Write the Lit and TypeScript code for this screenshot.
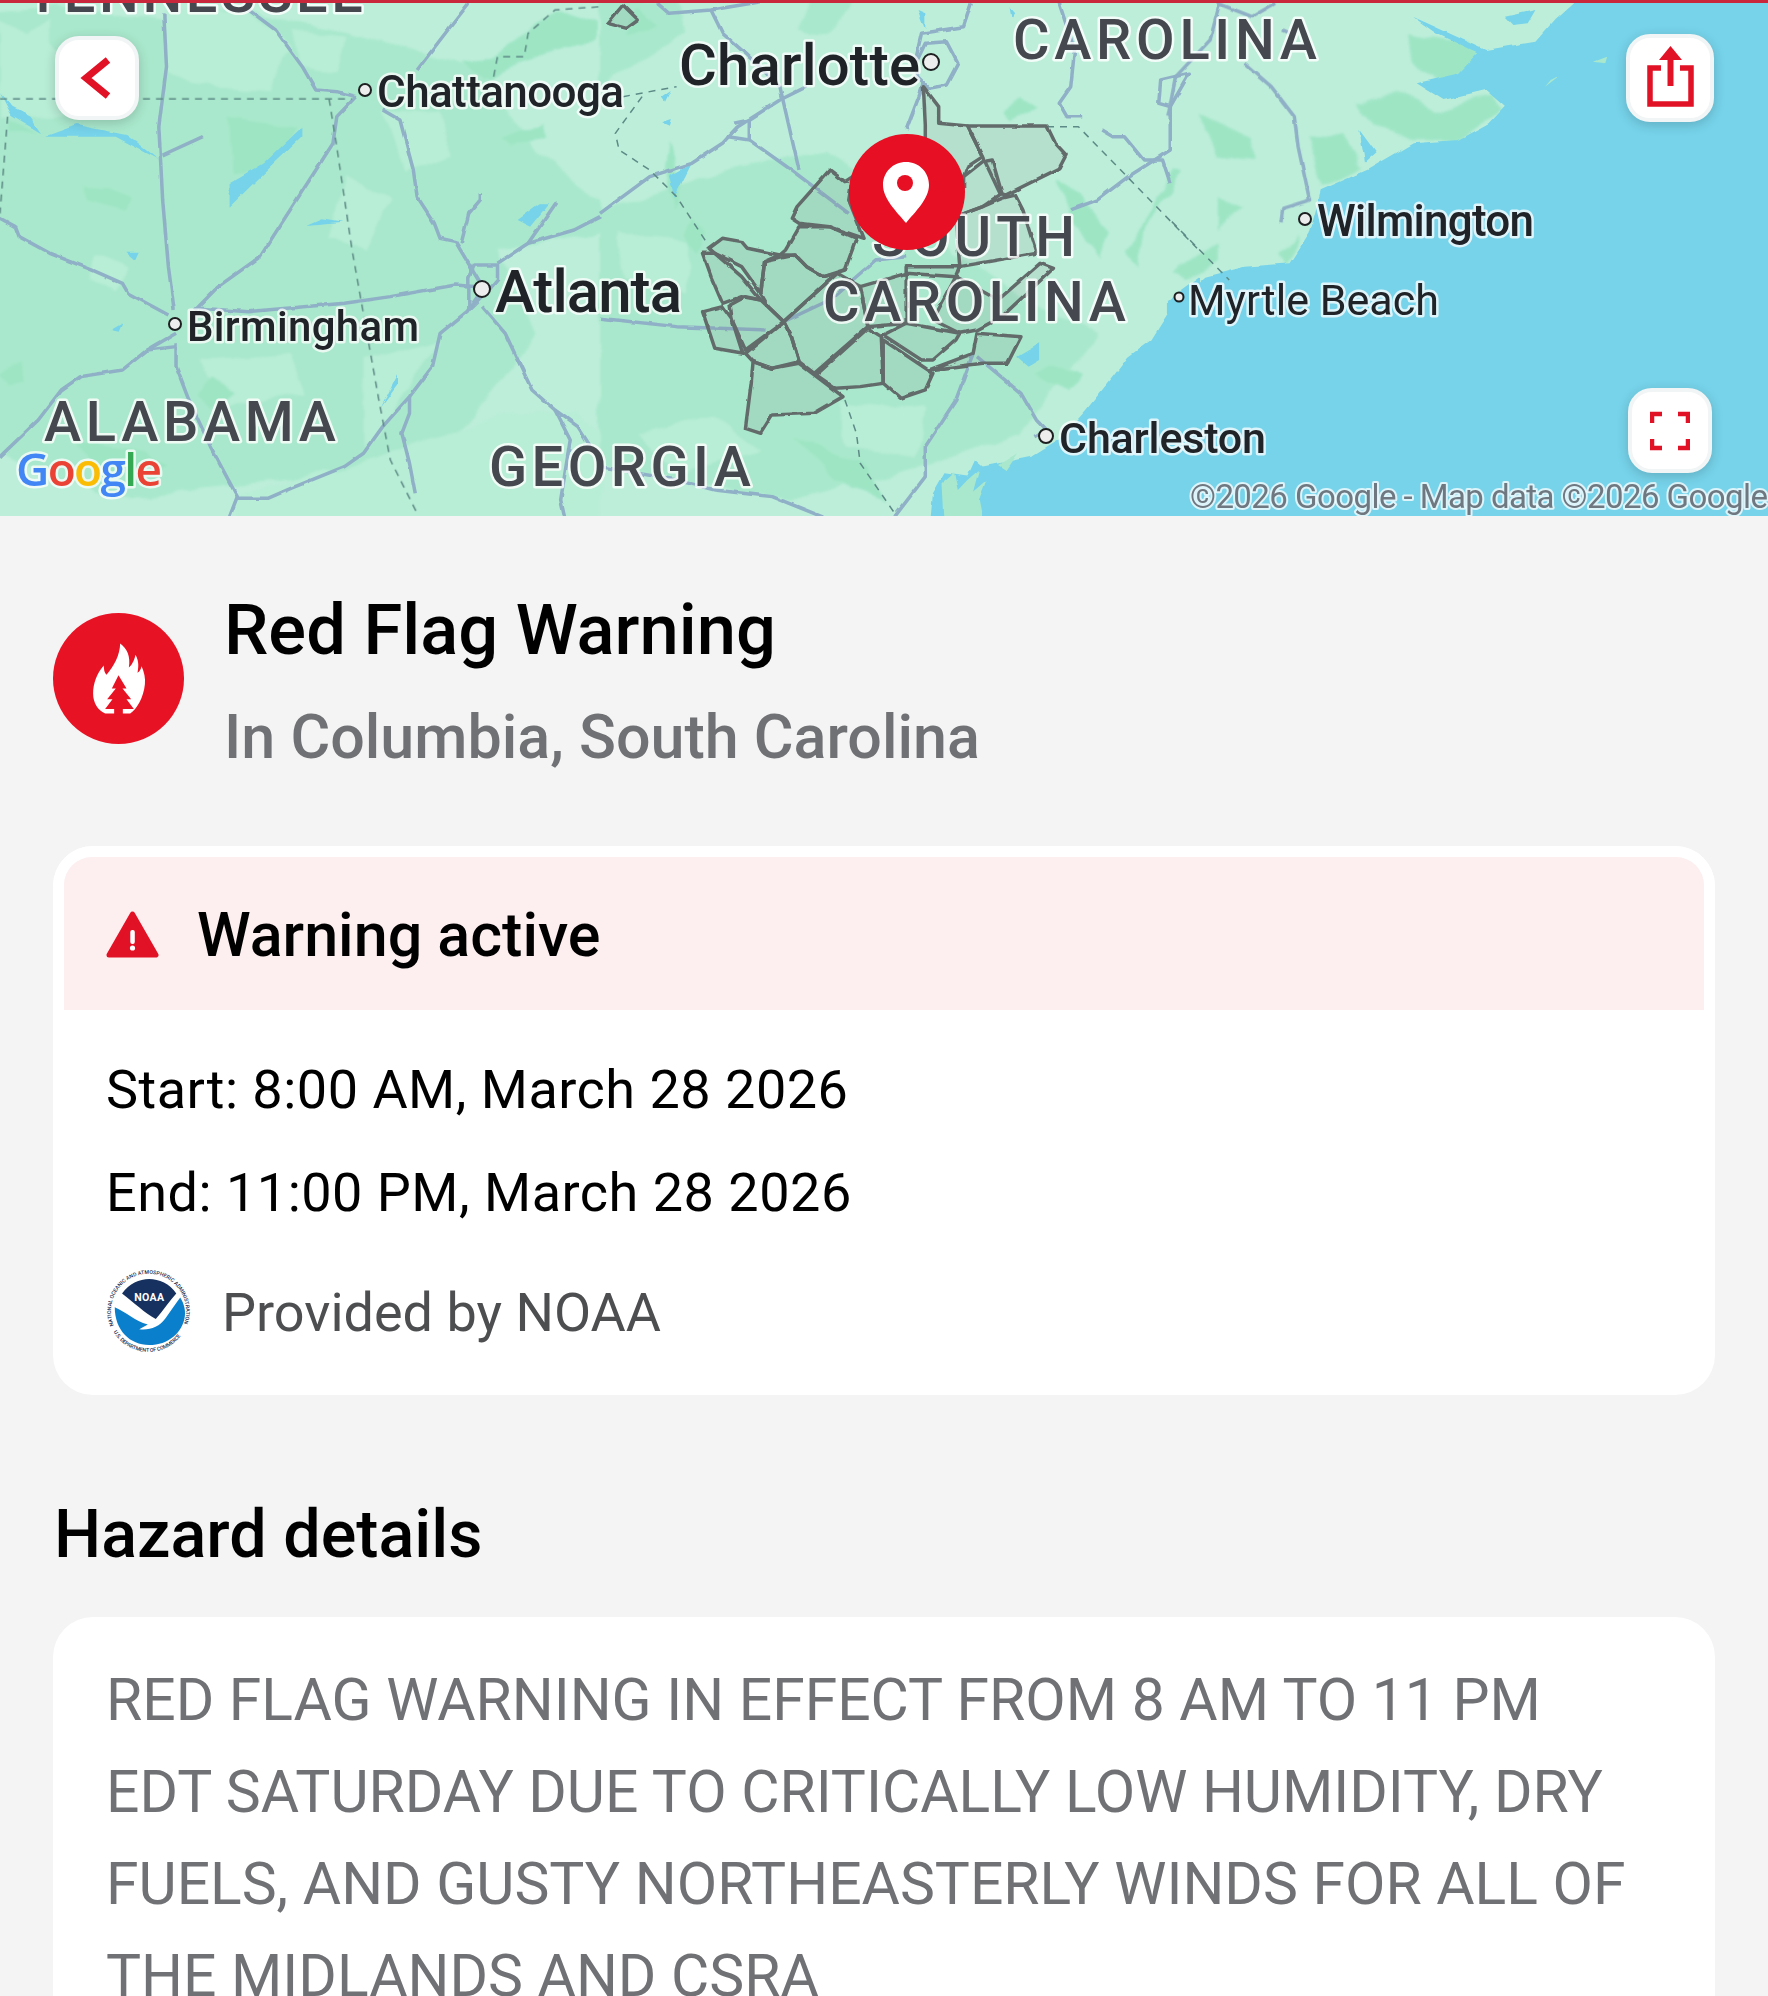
import { LitElement, html, svg, css } from 'lit';
import { customElement } from 'lit/decorators.js';

// map shapes were traced per region, each region has its own x offset
type Region = {
  ox: number;
  mid?: string[];
  dark?: string[];
  light?: string[];
  water?: string[];
  marsh?: string[];
  roads?: string[];
  borders?: string[];
  counties?: string[];
};

const REGIONS: Region[] = [
  {
    ox: 0,
    mid: [
      '-20,40 150,20 420,60 600,20 900,100 1250,200 1400,450 1568,600 1568,700 1300,750 1400,1000 1200,1300 950,1400 700,1450 300,1500 -20,1350',
    ],
    light: [
      '0,60 70,100 130,60 130,180 60,280 0,290',
      '430,30 640,30 760,130 700,280 520,260 430,210',
      '760,90 900,110 880,220 790,200',
      '1000,330 1150,340 1180,470 1060,520',
      '900,520 1020,600 960,760 860,720',
      '250,760 330,800 300,880 240,840',
      '950,1080 1150,1020 1050,1180 1000,1300 950,1350',
      '620,1490 900,1400 1100,1330 1300,1250 1500,1230 1568,1300 1568,1560 620,1560',
      '130,120 280,350 0,350 0,300',
      '520,1080 760,1060 800,1180 600,1220',
    ],
    dark: [
      '220,560 290,565 345,590 325,630 230,600',
      '600,350 780,380 690,510 610,520',
      '0,1120 60,1090 65,1140 20,1160',
      '1310,420 1420,370 1430,410 1340,450',
      '1200,180 1290,170 1450,40 1560,50 1560,120 1350,190 1280,240',
      '560,1130 610,1180 550,1220 520,1190',
      '200,1330 380,1350 440,1400 260,1420',
      '20,360 100,400 20,400',
    ],
    water: [
      '600,620 600,550 690,490 790,380 790,410 690,520',
      '800,675 840,655 895,665',
      '115,410 200,375 330,405 415,480 365,450 300,410',
      '0,280 30,345 110,400 80,350 30,320',
      '1350,660 1410,610 1435,610 1385,680',
      '330,755 365,755 355,780',
      '290,990 320,970 310,995',
      '995,1220 1040,1120 1040,1150',
    ],
    roads: [
      '428,40 435,200 415,380 425,600 440,800 455,930',
      '425,465 530,410',
      '650,30 720,90 790,200 825,270 880,275 930,290',
      '930,290 880,350 870,430 820,520 730,680 680,770 570,860 510,930',
      '1225,10 1170,90 1090,210',
      '1000,330 1045,360 1080,510 1090,590 1135,670 1150,715 1190,725 1260,860',
      '1205,730 1225,640 1255,600 1255,580',
      '1300,790 1380,730 1500,690 1568,650',
      '1380,730 1455,605',
      '0,655 40,680 50,710 130,760 240,810 320,850 335,880 440,945',
      '460,1000 385,1050 320,1110 210,1130 160,1170 100,1260 0,1370',
      '385,1050 460,1040',
      '460,1030 460,1100 490,1190 550,1340 620,1490 600,1550',
      '620,1495 700,1495 760,1465 900,1400 950,1360 1000,1280 1070,1190 1130,1100 1150,1000 1220,935 1260,870',
      '520,925 650,935 900,910 1020,890 1190,855 1250,860',
      '1070,1190 1070,1240 1050,1300 1070,1390 1085,1480',
      '1260,920 1320,1000 1390,1170 1450,1230 1510,1280 1560,1370',
      '1450,1230 1490,1320 1465,1500 1475,1550',
      '1225,930 1225,830 1240,795 1300,795 1300,840 1270,880 1225,930',
    ],
    borders: [
      '0,297 920,297',
      '860,297 880,440 920,750 990,1200 1020,1380 1090,1540',
      '20,350 0,640',
      '1290,230 1300,170 1370,170 1380,100 1450,30 1568,20',
    ],
  },
  {
    ox: 600,
    mid: [
      '0,640 350,500 600,450 850,700 1100,900 1300,1000 1100,1300 850,1400 500,1500 0,1400',
      '0,0 200,0 220,100 0,260',
      '560,0 650,0 600,100 520,90',
    ],
    light: [
      '100,1300 300,1250 420,1350 200,1420',
      '620,1200 850,1230 830,1380 650,1340',
      '40,700 230,720 230,880 60,840',
    ],
    dark: [
      '1050,340 1100,300 1140,320 1070,370',
      '1200,530 1260,600 1330,700 1310,780 1240,680',
      '180,420 210,560 190,620 170,500',
      '240,650 270,700 250,760 220,700',
      '1380,760 1500,510 1520,520 1430,680 1410,800',
      '100,20 150,70 70,110',
      '510,1310 600,1360 700,1400 750,1500 620,1440',
      '1130,1130 1180,1090 1250,1130 1220,1180',
    ],
    water: [
      '1568,830 1484,900 1484,940 1440,1020 1380,1070 1340,1130 1270,1230 1200,1320 1130,1370 1000,1400 980,1380 960,1430 900,1420 870,1480 860,1600 1568,1600',
      '180,530 240,490 195,590',
      '1090,1070 1150,1030 1150,1080 1120,1100',
      '830,30 850,40 850,90',
      '1070,20 1085,40 1075,55',
      '160,290 185,270 170,305',
      '160,370 185,360 180,380',
    ],
    marsh: [
      '895,1450 925,1420 935,1470 960,1440 990,1410 975,1475 1010,1440 990,1500 1000,1560 900,1560',
      '1040,1395 1090,1360 1060,1410',
    ],
    roads: [
      '150,10 180,40 290,30 420,5',
      '290,30 320,100 380,160 470,260 520,510',
      '0,640 130,530 240,490 320,430 360,380 470,300 540,260',
      '360,380 335,410 390,420 390,360 350,370',
      '390,420 500,510 650,640',
      '800,390 840,270 845,240',
      '820,200 840,100 950,80 970,10',
      '825,190 850,130 905,125 935,190 905,255 860,265 830,230 825,190',
      '1200,10 1240,150 1230,260 1200,310 1220,350 1260,350',
      '1490,320 1460,310 1465,240 1540,220 1490,320 1490,450 1380,530 1300,600 1230,630',
      '1310,390 1340,410 1370,410 1420,480 1470,480 1490,550',
      '0,955 200,980 430,990',
      '480,965 600,900 720,780 800,770',
      '975,1060 930,1200 850,1340 850,1430 770,1550',
      '985,1070 1100,1180 1140,1260 1165,1290 1135,1310',
      '0,1400 200,1440 300,1470 450,1490 580,1550',
    ],
    borders: [
      '60,290 200,260',
      '110,290 40,400 50,450 130,510 200,590 280,730',
      '640,1200 670,1300 680,1390 770,1540',
      '1168,380 1250,380 1560,745',
    ],
    counties: [
      '960,378 1168,378 1190,430 1218,465 1200,505 1060,585 1045,580 1000,470',
      '845,260 885,320 885,370 960,378 1000,470 960,500 950,530 850,530 850,375',
      '950,530 1000,485 1025,480 1050,580 1000,620 930,650 950,560',
      '1000,620 1050,595 1085,585 1105,630 1140,760 940,800 930,650',
      '600,510 640,545 660,530 650,600 690,715 600,680 520,670 500,655 515,620',
      '520,680 600,680 670,715 640,810 585,830 540,800 510,765 470,765 485,750',
      '430,785 510,765 540,800 585,830 620,820 480,965 440,920 420,880',
      '285,745 320,715 370,725 385,745 470,765 430,785 420,880 370,800 300,760',
      '268,760 300,760 370,830 420,900 370,890 320,910 290,830',
      '268,935 320,920 345,960 370,1050 375,1060 300,1045',
      '340,915 380,890 420,900 480,965 380,1050 345,960',
      '380,1060 480,965 500,1010 520,1085 450,1105 400,1085',
      '480,965 620,820 680,860 700,980 560,1120 520,1085 500,1010',
      '400,1085 450,1105 520,1090 635,1190 560,1240 450,1245 420,1300 380,1285 395,1150',
      '565,1125 700,985 735,1010 740,1150 680,1160 615,1165',
      '740,1020 870,1120 850,1170 785,1195 740,1150',
      '740,1005 800,970 940,1000 930,1020 870,1080 840,1080',
      '860,1110 975,1060 985,1000 1100,1010 1065,1090 1000,1090',
      '800,800 800,820 930,830 940,800',
      '680,860 800,820 800,970 700,980',
      '930,830 1040,900 1150,790 1185,805 1050,950 985,990 940,1000 870,960',
      '20,70 60,15 100,60 70,85',
    ],
  },
  {
    ox: 1168,
    dark: [
      '630,100 780,130 820,190 720,250 640,190',
      '490,310 600,280 700,330 840,280 870,340 760,420 640,420 540,370',
      '360,400 460,410 510,500 400,550',
      '80,340 210,410 230,480 130,470',
      '130,600 190,620 130,700',
      '290,760 340,700 320,790',
      '15,820 130,730 130,780 50,840',
    ],
    water: [
      '1060,8 1010,60 960,125 830,150 640,50 700,100 810,160 760,220 650,250 720,300 830,270 880,320 840,370 760,420 640,430 520,510 400,570 370,700 320,790 200,800 100,830 0,940 0,1600 1640,1600 1640,-40 1060,-40',
      '880,50 960,30 940,70 900,75',
      '500,390 545,460 515,490',
    ],
    marsh: ['1110,185 1145,170 1140,190', '985,260 1025,225 1000,240'],
    roads: [
      '200,190 270,260 330,350 340,440 370,600 300,625 295,670',
      '135,10 110,120 20,230 0,350',
      '280,10 220,50 130,10',
      '300,90 320,100',
    ],
    borders: ['10,665 160,840'],
  },
];

type Label = { t: string; x: number; y: number; s: number; w: number; cls: string };

const LABELS: Label[] = [
  { t: 'TENNESSEE', x: 26, y: 12, s: 56, w: 337, cls: 'state' },
  { t: 'ALABAMA', x: 44, y: 441, s: 56, w: 292, cls: 'state' },
  { t: 'GEORGIA', x: 489, y: 486, s: 56, w: 262, cls: 'state' },
  { t: 'CAROLINA', x: 1013, y: 59, s: 56, w: 304, cls: 'state' },
  { t: 'SOUTH', x: 872, y: 256, s: 56, w: 203, cls: 'state' },
  { t: 'CAROLINA', x: 823, y: 321, s: 56, w: 303, cls: 'state' },
  { t: 'Charlotte', x: 679, y: 85, s: 58, w: 241, cls: 'city' },
  { t: 'Chattanooga', x: 377, y: 107, s: 44, w: 247, cls: 'city' },
  { t: 'Atlanta', x: 495, y: 312, s: 60, w: 187, cls: 'city' },
  { t: 'Birmingham', x: 187, y: 341, s: 42, w: 232, cls: 'city' },
  { t: 'Wilmington', x: 1317, y: 236, s: 44, w: 217, cls: 'city' },
  { t: 'Myrtle Beach', x: 1188, y: 315, s: 43, w: 251, cls: 'city light' },
  { t: 'Charleston', x: 1059, y: 453, s: 43, w: 207, cls: 'city' },
];

const DOTS = [
  [365, 90, 6],
  [175, 324, 6],
  [482, 289, 8],
  [931, 62, 8],
  [1046, 436, 7],
  [1305, 219, 6],
  [1179, 297, 4.5],
];

const GOOGLE = [
  ['G', '#4285f4'],
  ['o', '#ea4335'],
  ['o', '#fbbc05'],
  ['g', '#4285f4'],
  ['l', '#34a853'],
  ['e', '#ea4335'],
];

const shapes = (list: string[] | undefined, cls: string) =>
  (list ?? []).map((p) => svg`<polygon class=${cls} points=${p}></polygon>`);
const lines = (list: string[] | undefined, cls: string) =>
  (list ?? []).map((p) => svg`<polyline class=${cls} points=${p}></polyline>`);

// one pass over all regions, so a filter can sit on the whole layer
const layer = (draw: (r: Region) => unknown) =>
  REGIONS.map(
    (r) => svg`<g transform="translate(${r.ox} 0) scale(0.3827 0.3333)">${draw(r)}</g>`,
  );

const rough = (id: string, freq: number, scale: number, blur: number) => svg`
  <filter id=${id} filterUnits="userSpaceOnUse" x="-30" y="-30" width="1828" height="576">
    <feTurbulence type="fractalNoise" baseFrequency=${freq} numOctaves="2" seed="4"></feTurbulence>
    <feDisplacementMap in="SourceGraphic" scale=${scale} xChannelSelector="R" yChannelSelector="G"></feDisplacementMap>
    <feGaussianBlur stdDeviation=${blur}></feGaussianBlur>
  </filter>
`;

@customElement('app-root')
export class AppRoot extends LitElement {
  static styles = css`
    :host {
      display: block;
      width: 1768px;
      height: 1996px;
      overflow: hidden;
      background: #f4f4f4;
      font-family: Roboto, sans-serif;
      color: #000;
    }
    .map {
      position: relative;
      height: 516px;
      overflow: hidden;
    }
    .map > svg {
      display: block;
    }
    .land {
      fill: #bdeeda;
    }
    .mid {
      fill: #a9e8cc;
    }
    .light {
      fill: #b8edd6;
    }
    .dark {
      fill: #9ee5c4;
    }
    .water {
      fill: #76d3ea;
    }
    .marsh {
      fill: #a9e8cc;
    }
    .road,
    .border,
    .county {
      vector-effect: non-scaling-stroke;
      stroke-linejoin: round;
    }
    .road {
      fill: none;
      stroke: #8fb0c6;
      stroke-width: 3.5px;
    }
    .border {
      fill: none;
      stroke: #5d8a86;
      stroke-width: 1.5px;
      stroke-dasharray: 7 6;
    }
    .county {
      fill: rgba(110, 120, 115, 0.12);
      stroke: #626b6b;
      stroke-width: 3.5px;
    }
    .dot {
      fill: #ededed;
      stroke: #1d1f20;
      stroke-width: 2px;
    }
    .topline {
      fill: #c9283c;
    }
    .label {
      paint-order: stroke;
      stroke-linejoin: round;
      font-family: Roboto, sans-serif;
    }
    .state {
      fill: #45494f;
      stroke: rgba(255, 255, 255, 0.8);
      stroke-width: 5px;
      font-weight: 500;
    }
    .city {
      fill: #202327;
      stroke: rgba(255, 255, 255, 0.75);
      stroke-width: 5px;
      font-weight: 500;
    }
    .city.light {
      font-weight: 400;
    }
    .copy {
      fill: #6f7880;
      stroke: rgba(255, 255, 255, 0.75);
      stroke-width: 4px;
    }
    .logo {
      stroke: rgba(255, 255, 255, 0.75);
      stroke-width: 5px;
      font-family: 'Open Sans', sans-serif;
      font-weight: 600;
    }
    .btn {
      position: absolute;
      display: flex;
      align-items: center;
      justify-content: center;
      box-sizing: border-box;
      background: #fff;
      border: 4px solid #f2f5f5;
      border-radius: 24px;
      box-shadow: 0 3px 12px rgba(0, 0, 0, 0.18);
    }
    .back {
      left: 55px;
      top: 36px;
      width: 84px;
      height: 84px;
    }
    .share {
      left: 1626px;
      top: 34px;
      width: 88px;
      height: 88px;
      padding-bottom: 4px;
    }
    .full {
      left: 1628px;
      top: 388px;
      width: 84px;
      height: 85px;
    }
    .ic {
      fill: none;
      stroke: #e11225;
    }
    .head {
      display: flex;
      align-items: center;
      gap: 40px;
      padding: 65px 53px 70px;
    }
    .flame {
      width: 131px;
      height: 131px;
      flex: none;
    }
    .names {
      padding-top: 6px;
    }
    .title {
      font-size: 70.5px;
      line-height: 86px;
      font-weight: 500;
    }
    .sub {
      margin-top: 25px;
      font-size: 61px;
      line-height: 78px;
      font-weight: 500;
      color: #707174;
    }
    .card {
      margin: 0 53px;
      background: #fff;
      border-radius: 40px;
    }
    .status {
      box-sizing: border-box;
      border: 11px solid #fff;
      border-bottom: none;
      border-radius: 40px 40px 0 0;
    }
    .band {
      display: flex;
      align-items: center;
      gap: 38px;
      box-sizing: border-box;
      height: 153px;
      padding: 2px 0 0 42px;
      background: #fdeeef;
      border-radius: 28px 28px 0 0;
      font-size: 61px;
      font-weight: 500;
    }
    .band svg {
      width: 53px;
      height: 47px;
    }
    .rows {
      padding: 28px 53px 40px;
      font-size: 54px;
    }
    .row {
      height: 103px;
      line-height: 103px;
      letter-spacing: 0.5px;
    }
    .prov {
      display: flex;
      align-items: center;
      gap: 31px;
      height: 86px;
      margin-top: 25px;
      color: #4d4e50;
      font-size: 54px;
    }
    .prov svg {
      width: 85px;
      height: 86px;
      flex: none;
    }
    h2 {
      margin: 0;
      padding: 102px 54px 45px;
      font-size: 66.5px;
      line-height: 75px;
      font-weight: 500;
    }
    .text {
      padding: 37px 83px 37px 53px;
      font-size: 58.8px;
      line-height: 92px;
      color: #707174;
    }
  `;

  private _map() {
    return svg`
      <svg width="1768" height="516" viewBox="0 0 1768 516">
        <defs>
          ${rough('patchy', 0.03, 14, 0.8)}
          ${rough('coast', 0.06, 5, 0.4)}
          ${rough('wobble', 0.08, 3, 0.3)}
        </defs>
        <rect class="land" width="1768" height="516"></rect>
        <g filter="url(#patchy)">
          ${layer((r) => [shapes(r.mid, 'mid'), shapes(r.light, 'light'), shapes(r.dark, 'dark')])}
        </g>
        <g filter="url(#coast)">
          ${layer((r) => [shapes(r.water, 'water'), shapes(r.marsh, 'marsh')])}
        </g>
        <g filter="url(#wobble)">${layer((r) => lines(r.roads, 'road'))}</g>
        ${layer((r) => lines(r.borders, 'border'))}
        <g filter="url(#wobble)">${layer((r) => shapes(r.counties, 'county'))}</g>
        ${DOTS.map(([x, y, r]) => svg`<circle class="dot" cx=${x} cy=${y} r=${r}></circle>`)}
        ${LABELS.map(
          (l) => svg`
            <text class="label ${l.cls}" x=${l.x} y=${l.y} font-size=${l.s} textLength=${l.w}>${l.t}</text>`,
        )}
        <text class="label logo" x="16" y="486" font-size="46" textLength="146">
          ${GOOGLE.map(([c, f]) => svg`<tspan fill=${f}>${c}</tspan>`)}
        </text>
        <text class="label copy" x="1190" y="508" font-size="33" textLength="578">©2026 Google - Map data ©2026 Google</text>
        <circle cx="907" cy="192" r="58" fill="#e60f23"></circle>
        <path
          d="M906 162c-13 0-23 10-23 23 0 14 14 27 23 38 9-11 23-24 23-38 0-13-10-23-23-23z"
          fill="#fff"
        ></path>
        <circle cx="905" cy="183" r="8" fill="#e60f23"></circle>
        <rect class="topline" width="1768" height="3"></rect>
      </svg>
    `;
  }

  render() {
    return html`
      <div class="map">
        ${this._map()}
        <div class="btn back">
          <svg width="40" height="52" viewBox="0 0 40 52">
            <path class="ic" d="M31 8 9 26l22 18" stroke-width="7"></path>
          </svg>
        </div>
        <div class="btn share">
          <svg width="47" height="61" viewBox="0 0 47 61">
            <path class="ic" d="M14 22H3v36h41V22H33" stroke-width="5.500"></path>
            <path class="ic" d="M23.500 40V8" stroke-width="6"></path>
            <path d="M23.500 0 35 14H12z" fill="#e11225"></path>
          </svg>
        </div>
        <div class="btn full">
          <svg width="40" height="40" viewBox="0 0 40 40">
            <path
              class="ic"
              d="M2 12V3h10M28 3h10v9M38 28v9H28M12 37H2v-9"
              stroke-width="4.500"
            ></path>
          </svg>
        </div>
      </div>

      <div class="head">
        <svg class="flame" viewBox="69 99 392 392">
          <circle cx="265" cy="295" r="196" fill="#e81225"></circle>
          <path
            fill="#fff"
            d="M225 400c-22-10-36-32-36-60 0-30 12-62 32-84 0 12 2 22 8 28 22-26 40-58 41-94 20 14 32 38 26 72 8-6 16-20 20-38 12 22 8 40 6 54 6-4 10-10 12-20 8 18 12 36 10 54-4 40-24 74-44 88z"
          ></path>
          <path
            fill="#e81225"
            d="M265 285l24 40h-12l26 32h-14l22 29h-33v16h-26v-16h-27l22-29h-16l26-32h-12z"
          ></path>
        </svg>
        <div class="names">
          <div class="title">Red Flag Warning</div>
          <div class="sub">In Columbia, South Carolina</div>
        </div>
      </div>

      <div class="card">
        <div class="status">
          <div class="band">
            <svg viewBox="0 0 53 47">
              <path
                d="M26.500 3 50 44H3z"
                fill="#e11225"
                stroke="#e11225"
                stroke-width="5"
                stroke-linejoin="round"
              ></path>
              <rect x="24.300" y="19" width="4.500" height="14" rx="2" fill="#fff"></rect>
              <circle cx="26.500" cy="37" r="2.600" fill="#fff"></circle>
            </svg>
            <span>Warning active</span>
          </div>
        </div>
        <div class="rows">
          <div class="row">Start: 8:00 AM, March 28 2026</div>
          <div class="row">End: 11:00 PM, March 28 2026</div>
          <div class="prov">
            <svg viewBox="40 44 256 260">
              <defs>
                <path id="ringTop" d="M63 215A113.500 113.500 0 1 1 273 215"></path>
                <path id="ringBot" d="M62 234A123 123 0 0 0 274 234"></path>
              </defs>
              <circle cx="168" cy="172" r="128" fill="#fff"></circle>
              <path
                fill="#16315f"
                d="M88 118c22-30 52-44 82-44s62 14 82 44c-20 22-38 50-62 77-34-18-66-50-102-77z"
              ></path>
              <path
                fill="#0a80cd"
                d="M66 160c34 14 60 42 100 52l-26 14c30 4 60-6 80-34 16-22 30-44 44-62 12 20 16 38 14 56-6 50-50 88-108 88-58 0-104-44-104-114z"
              ></path>
              <text x="170" y="140" text-anchor="middle" font-size="32" font-weight="700" fill="#fff" font-family="Roboto, sans-serif" textLength="90">NOAA</text>
              <text font-size="16" font-weight="500" fill="#1c2f50" font-family="Roboto, sans-serif">
                <textPath href="#ringTop" textLength="438">NATIONAL OCEANIC AND ATMOSPHERIC ADMINISTRATION</textPath>
              </text>
              <text font-size="16" font-weight="500" fill="#1c2f50" font-family="Roboto, sans-serif">
                <textPath href="#ringBot" textLength="240">U.S. DEPARTMENT OF COMMERCE</textPath>
              </text>
            </svg>
            Provided by NOAA
          </div>
        </div>
      </div>

      <h2>Hazard details</h2>

      <div class="card text">
        RED FLAG WARNING IN EFFECT FROM 8 AM TO 11 PM EDT SATURDAY DUE TO CRITICALLY LOW HUMIDITY, DRY
        FUELS, AND GUSTY NORTHEASTERLY WINDS FOR ALL OF THE MIDLANDS AND CSRA
      </div>
    `;
  }
}

declare global {
  interface HTMLElementTagNameMap {
    'app-root': AppRoot;
  }
}
